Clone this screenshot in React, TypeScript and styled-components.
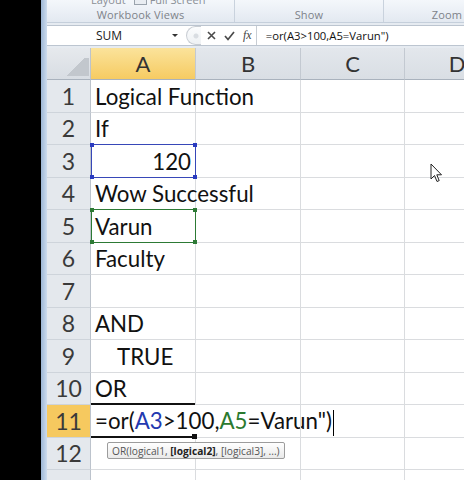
import React from 'react'
import styled, { createGlobalStyle, css } from 'styled-components'

const GlobalStyle = createGlobalStyle`
  html, body {
    margin: 0;
    padding: 0;
    background: #000;
  }
  body {
    font-family: "Open Sans", "Liberation Sans", sans-serif;
    overflow: hidden;
  }
`

const CELL_FONT = `Lato, "Open Sans", sans-serif`

const Screen = styled.div`
  display: flex;
  width: 464px;
  height: 480px;
  overflow: hidden;
  background: #000;
`

const BlackBar = styled.div`
  width: 41px;
  flex: none;
  background: #000;
`

const FrameEdge = styled.div`
  width: 6px;
  flex: none;
  background: linear-gradient(to right, #9db6d4, #cddcee);
`

const Window = styled.div`
  flex: 1;
  min-width: 0;
  display: flex;
  flex-direction: column;
  background: #e6ebf1;
  overflow: hidden;
`

// ---- ribbon ----
const Ribbon = styled.div`
  display: flex;
  height: 22px;
  flex: none;
  background: linear-gradient(#f4f7fb, #e3e9f1);
  border-bottom: 1px solid #c5cfdb;
`

const Group = styled.div<{ $w: number }>`
  width: ${p => p.$w}px;
  flex: none;
  display: flex;
  flex-direction: column;
  border-right: 1px solid #c9d2dd;
`

const GroupBody = styled.div`
  height: 8px;
  display: flex;
  align-items: flex-end;
  gap: 8px;
  padding-left: 44px;
  overflow: hidden;
  font-size: 11px;
  line-height: 14px;
  color: #8a8f96;
`

const TinyIcon = styled.span`
  display: inline-block;
  width: 11px;
  height: 9px;
  margin-bottom: 2px;
  border: 1px solid #9aa3ad;
  background: #e9edf2;
`

const GroupLabel = styled.div`
  flex: 1;
  display: flex;
  align-items: center;
  justify-content: center;
  font-size: 11px;
  color: #7d8289;
  letter-spacing: 0.2px;
`

// ---- formula bar ----
const FormulaBar = styled.div`
  display: flex;
  align-items: stretch;
  height: 19px;
  margin: 2px 0 2px;
  flex: none;
  background: #fff;
  border-top: 1px solid #bcc5d0;
  border-bottom: 1px solid #bcc5d0;
  font-size: 12px;
  color: #222;
`

const NameBox = styled.div`
  width: 137px;
  flex: none;
  display: flex;
  align-items: center;
  justify-content: space-between;
  padding: 0 6px 0 49px;
  box-sizing: border-box;
`

const DropArrow = styled.span`
  width: 0;
  height: 0;
  border-left: 3px solid transparent;
  border-right: 3px solid transparent;
  border-top: 3px solid #333;
`

const Grip = styled.div`
  width: 14px;
  flex: none;
  margin-left: 2px;
  border-radius: 10px 0 0 10px;
  border: 1px solid #c8cdd3;
  border-right: none;
  background: radial-gradient(circle at 9px 9px, #d9dde2 2px, transparent 3px), linear-gradient(#fbfcfd, #eef1f4);
`

const FxTools = styled.div`
  display: flex;
  align-items: center;
  gap: 8px;
  padding: 0 4px 0 6px;
  border-right: 1px solid #c8cdd3;
  color: #555;
`

const Fx = styled.span`
  font-family: "Liberation Serif", serif;
  font-style: italic;
  font-size: 12px;
  color: #444;
`

const FormulaText = styled.div`
  flex: 1;
  display: flex;
  align-items: center;
  padding-left: 9px;
  font-size: 11.3px;
  color: #111;
  white-space: nowrap;
`

// ---- sheet ----
const Sheet = styled.div`
  position: relative;
  display: grid;
  grid-template-columns: 44px 105px 105px 104px 105px;
  grid-template-rows: 32px repeat(13, 32.5px);
  background: #fff;
  font-family: ${CELL_FONT};
`

const Corner = styled.div`
  background:
    linear-gradient(135deg, transparent 50%, #c2c7cd 50%) right 1px bottom 3px / 27px 18px no-repeat,
    linear-gradient(#e6e9ed, #d8dde3);
  border-right: 1px solid #bcc3cc;
  border-bottom: 1px solid #a9b2bd;
`

const ColHead = styled.div<{ $active?: boolean }>`
  display: flex;
  align-items: center;
  justify-content: center;
  font-size: 22px;
  color: #333;
  border-right: 1px solid #c3c9d1;
  border-bottom: 1px solid #a9b2bd;
  background: ${p => (p.$active ? 'linear-gradient(#fbe39b, #f6cb62)' : 'linear-gradient(#e3e7ec, #d9dee4)')};
`

const RowHead = styled.div<{ $active?: boolean }>`
  display: flex;
  align-items: center;
  justify-content: center;
  font-size: 23px;
  color: #3a3a3a;
  border-right: 1px solid #bcc3cc;
  border-bottom: 1px solid #ced4db;
  background: ${p => (p.$active ? '#f6c95f' : '#e4e8ed')};
`

const Cell = styled.div<{ $align?: 'left' | 'right'; $indent?: boolean; $mark?: 'blue' | 'green' | 'edit' }>`
  position: relative;
  display: flex;
  align-items: center;
  justify-content: ${p => (p.$align === 'right' ? 'flex-end' : 'flex-start')};
  padding: 1px 4px 0 ${p => (p.$indent ? 26 : 4)}px;
  border-right: 1px solid #dadcdf;
  border-bottom: 1px solid #dadcdf;
  font-size: 22.3px;
  color: #111;
  white-space: nowrap;
  min-width: 0;
  ${p =>
    p.$mark === 'blue' &&
    css`
      &::before {
        content: '';
        position: absolute;
        inset: -1px -1px -1px 0;
        border: 1px solid #3747b8;
      }
    `}
  ${p =>
    p.$mark === 'green' &&
    css`
      &::before {
        content: '';
        position: absolute;
        inset: -1px -1px -1px 0;
        border: 1px solid #2d7a35;
      }
    `}
  ${p =>
    p.$mark === 'edit' &&
    css`
      border-right-color: transparent;
      &::before {
        content: '';
        position: absolute;
        inset: -2px 0 -1px 0;
        border-top: 2px solid #111;
        border-bottom: 2px solid #111;
      }
    `}
`

const Handle = styled.span<{ $x: 'l' | 'r'; $y: 't' | 'b'; $color: string; $size?: number }>`
  position: absolute;
  width: ${p => p.$size || 4}px;
  height: ${p => p.$size || 4}px;
  background: ${p => p.$color};
  ${p => (p.$x === 'l' ? 'left: -1px;' : 'right: -2px;')}
  ${p => (p.$y === 't' ? 'top: -2px;' : 'bottom: -2px;')}
  z-index: 2;
`

const Ref = styled.span<{ $c: string }>`
  color: ${p => p.$c};
`

const Caret = styled.span`
  display: inline-block;
  width: 1px;
  height: 26px;
  margin-left: 1px;
  background: #000;
  vertical-align: middle;
`

const Tip = styled.div`
  position: absolute;
  left: 60px;
  top: 394px;
  height: 15px;
  padding: 0 4px;
  display: flex;
  align-items: center;
  font-family: "Open Sans", sans-serif;
  font-size: 10.2px;
  color: #555;
  background: linear-gradient(#ffffff, #e9e9e9);
  border: 1px solid #9c9c9c;
  border-radius: 2px;
  white-space: nowrap;
  z-index: 3;
  b {
    color: #222;
  }
`

const Pointer = styled.svg`
  position: absolute;
  left: 383px;
  top: 115px;
  z-index: 3;
`

type Row = {
  n: number
  label?: string
  text?: string
  align?: 'left' | 'right'
  indent?: boolean
  mark?: 'blue' | 'green' | 'edit'
}

const rows: Row[] = [
  { n: 1, text: 'Logical Function' },
  { n: 2, text: 'If' },
  { n: 3, text: '120', align: 'right', mark: 'blue' },
  { n: 4, text: 'Wow Successful' },
  { n: 5, text: 'Varun', mark: 'green' },
  { n: 6, text: 'Faculty' },
  { n: 7 },
  { n: 8, text: 'AND' },
  { n: 9, text: 'TRUE', indent: true },
  { n: 10, text: 'OR' },
  { n: 11, mark: 'edit' },
  { n: 12 },
  { n: 13, label: '' },
]

const handleColor = (m?: string) => (m === 'blue' ? '#2a3bc0' : m === 'green' ? '#2d7a35' : '#111')

const App = () => {
  return (
    <Screen>
      <GlobalStyle />
      <BlackBar />
      <FrameEdge />
      <Window>
        <Ribbon>
          <Group $w={187}>
            <GroupBody>
              <span>Layout</span>
              <TinyIcon />
              <span style={{ marginLeft: -5 }}>Full Screen</span>
            </GroupBody>
            <GroupLabel>Workbook Views</GroupLabel>
          </Group>
          <Group $w={148}>
            <GroupBody />
            <GroupLabel>Show</GroupLabel>
          </Group>
          <Group $w={126}>
            <GroupBody />
            <GroupLabel>Zoom</GroupLabel>
          </Group>
        </Ribbon>

        <FormulaBar>
          <NameBox>
            <span>SUM</span>
            <DropArrow />
          </NameBox>
          <Grip />
          <FxTools>
            <svg width="9" height="9" viewBox="0 0 9 9">
              <path d="M1 1 L8 8 M8 1 L1 8" stroke="#4a4a4a" strokeWidth="1.6" />
            </svg>
            <svg width="11" height="10" viewBox="0 0 11 10">
              <path d="M1 5 L4 8.5 L10 1" stroke="#4a4a4a" strokeWidth="1.7" fill="none" />
            </svg>
            <Fx>fx</Fx>
          </FxTools>
          <FormulaText>=or(A3&gt;100,A5=Varun")</FormulaText>
        </FormulaBar>

        <Sheet>
          <Corner />
          <ColHead $active>A</ColHead>
          <ColHead>B</ColHead>
          <ColHead>C</ColHead>
          <ColHead>D</ColHead>
          {rows.map(r => (
            <React.Fragment key={r.n}>
              <RowHead $active={r.n === 11}>{r.label ?? r.n}</RowHead>
              <Cell $align={r.align} $indent={r.indent} $mark={r.mark}>
                {r.n === 11 ? (
                  <span>
                    =or(<Ref $c="#2339b0">A3</Ref>&gt;100,<Ref $c="#2b7a2f">A5</Ref>=Varun")
                    <Caret />
                  </span>
                ) : (
                  r.text
                )}
                {(r.mark === 'blue' || r.mark === 'green') && (
                  <>
                    <Handle $x="l" $y="t" $color={handleColor(r.mark)} />
                    <Handle $x="r" $y="t" $color={handleColor(r.mark)} />
                    <Handle $x="l" $y="b" $color={handleColor(r.mark)} />
                    <Handle $x="r" $y="b" $color={handleColor(r.mark)} />
                  </>
                )}
                {r.mark === 'edit' && <Handle $x="r" $y="b" $color="#111" $size={5} />}
              </Cell>
              <Cell />
              <Cell />
              <Cell />
            </React.Fragment>
          ))}
          <Tip>
            OR(logical1,&nbsp;<b>[logical2]</b>, [logical3], ...)
          </Tip>
          <Pointer width="13" height="20" viewBox="0 0 13 20">
            <path d="M1 1 L1 16 L4.5 12.5 L7 18.5 L9.2 17.6 L6.8 11.8 L11.5 11.8 Z" fill="#fff" stroke="#222" strokeWidth="1" strokeLinejoin="round" />
          </Pointer>
        </Sheet>
      </Window>
    </Screen>
  )
}

export default App
